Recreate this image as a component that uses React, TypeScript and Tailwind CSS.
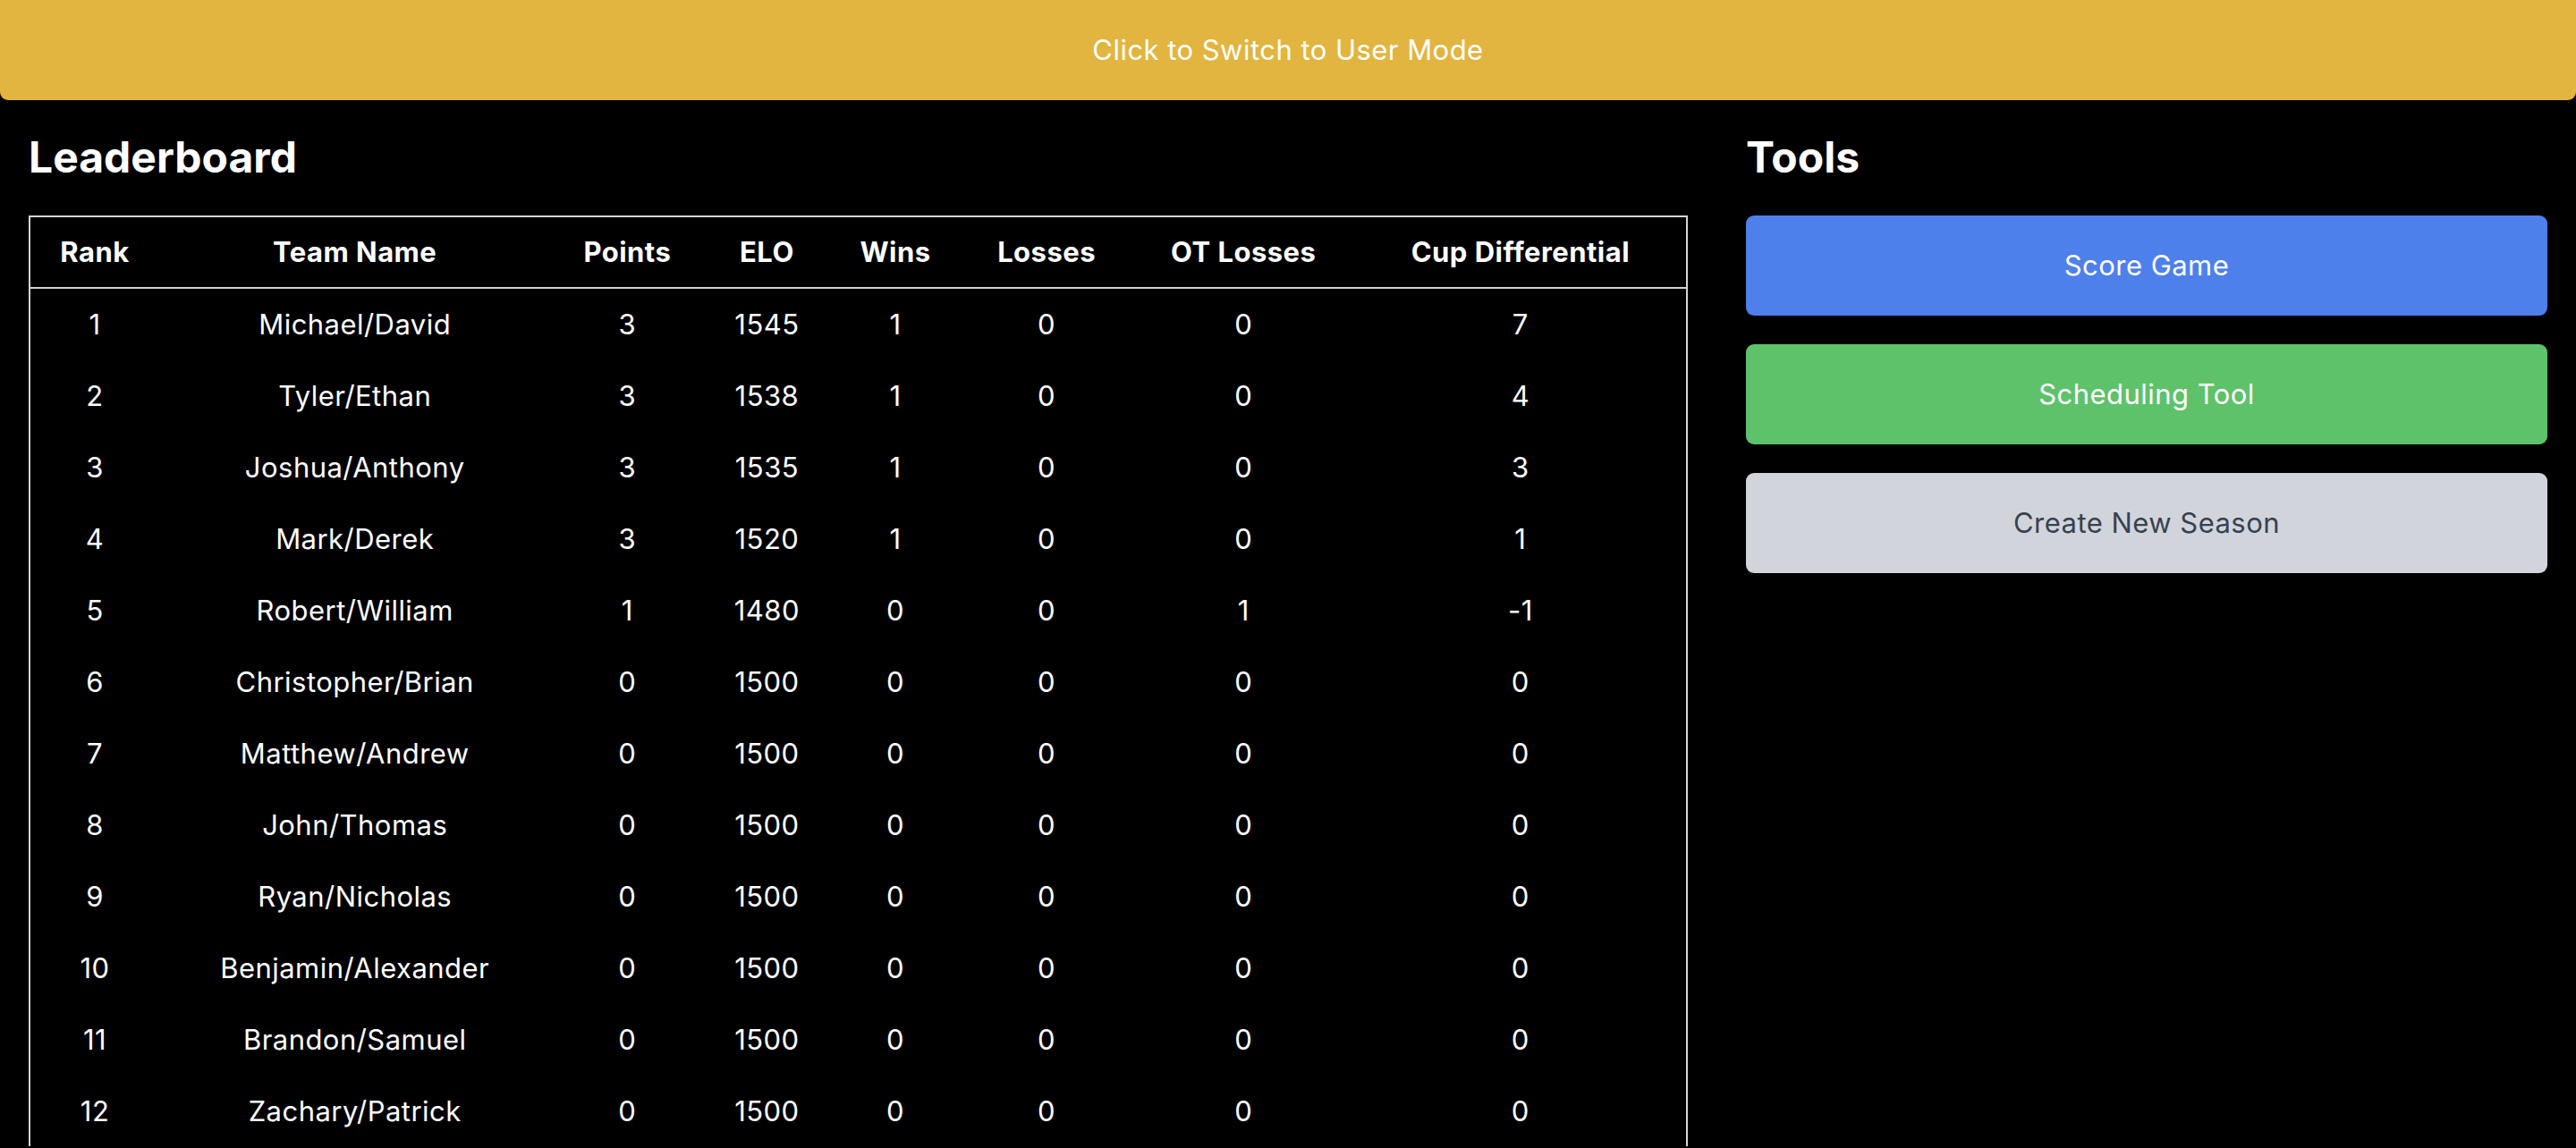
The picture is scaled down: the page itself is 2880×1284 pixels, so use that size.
const teams = [
  { rank: 1, name: "Michael/David", points: 3, elo: 1545, wins: 1, losses: 0, ot: 0, cup: 7 },
  { rank: 2, name: "Tyler/Ethan", points: 3, elo: 1538, wins: 1, losses: 0, ot: 0, cup: 4 },
  { rank: 3, name: "Joshua/Anthony", points: 3, elo: 1535, wins: 1, losses: 0, ot: 0, cup: 3 },
  { rank: 4, name: "Mark/Derek", points: 3, elo: 1520, wins: 1, losses: 0, ot: 0, cup: 1 },
  { rank: 5, name: "Robert/William", points: 1, elo: 1480, wins: 0, losses: 0, ot: 1, cup: -1 },
  { rank: 6, name: "Christopher/Brian", points: 0, elo: 1500, wins: 0, losses: 0, ot: 0, cup: 0 },
  { rank: 7, name: "Matthew/Andrew", points: 0, elo: 1500, wins: 0, losses: 0, ot: 0, cup: 0 },
  { rank: 8, name: "John/Thomas", points: 0, elo: 1500, wins: 0, losses: 0, ot: 0, cup: 0 },
  { rank: 9, name: "Ryan/Nicholas", points: 0, elo: 1500, wins: 0, losses: 0, ot: 0, cup: 0 },
  { rank: 10, name: "Benjamin/Alexander", points: 0, elo: 1500, wins: 0, losses: 0, ot: 0, cup: 0 },
  { rank: 11, name: "Brandon/Samuel", points: 0, elo: 1500, wins: 0, losses: 0, ot: 0, cup: 0 },
  { rank: 12, name: "Zachary/Patrick", points: 0, elo: 1500, wins: 0, losses: 0, ot: 0, cup: 0 },
];

const App = () => {
  return (
    <div className="min-h-screen bg-black text-white font-['Inter',sans-serif]">
      <button className="w-full h-[112px] bg-[#e1b53f] rounded-b-[9px] text-[31px] tracking-[0.015em] text-white">
        Click to Switch to User Mode
      </button>

      <div className="flex gap-[65px] px-[32px]">
        <div className="flex-1">
          <h2 className="pt-[36px] mb-[37px] h-[92px] text-[48px] leading-[56px] font-bold">
            Leaderboard
          </h2>
          {/* table runs on past the fold, so no bottom edge in view */}
          <table className="w-full table-fixed border-collapse border-2 border-b-0 border-[#d4d4d4] text-center text-[31px] tracking-[0.015em]">
            <thead>
              <tr className="h-[80px] border-b-2 border-[#d4d4d4] font-bold">
                <th className="w-[145px]">Rank</th>
                <th className="w-[437px]">Team Name</th>
                <th className="w-[172px]">Points</th>
                <th className="w-[140px]">ELO</th>
                <th className="w-[147px]">Wins</th>
                <th className="w-[191px]">Losses</th>
                <th className="w-[249px]">OT Losses</th>
                <th className="w-[371px]">Cup Differential</th>
              </tr>
            </thead>
            <tbody>
              {teams.map((t) => (
                <tr key={t.rank} className="h-[80px]">
                  <td className="pt-[2px]">{t.rank}</td>
                  <td className="pt-[2px]">{t.name}</td>
                  <td className="pt-[2px]">{t.points}</td>
                  <td className="pt-[2px]">{t.elo}</td>
                  <td className="pt-[2px]">{t.wins}</td>
                  <td className="pt-[2px]">{t.losses}</td>
                  <td className="pt-[2px]">{t.ot}</td>
                  <td className="pt-[2px]">{t.cup}</td>
                </tr>
              ))}
            </tbody>
          </table>
        </div>

        <div className="w-[896px]">
          <h2 className="pt-[36px] mb-[37px] h-[92px] text-[48px] leading-[56px] font-bold">Tools</h2>
          <div className="flex flex-col gap-[32px] text-[31px] tracking-[0.015em]">
            <button className="h-[112px] rounded-[9px] bg-[#4e80ec] text-white">
              Score Game
            </button>
            <button className="h-[112px] rounded-[9px] bg-[#5ec26a] text-white">
              Scheduling Tool
            </button>
            <button className="h-[112px] rounded-[9px] bg-[#d1d5db] text-[#374151]">
              Create New Season
            </button>
          </div>
        </div>
      </div>
    </div>
  );
};

export default App;
